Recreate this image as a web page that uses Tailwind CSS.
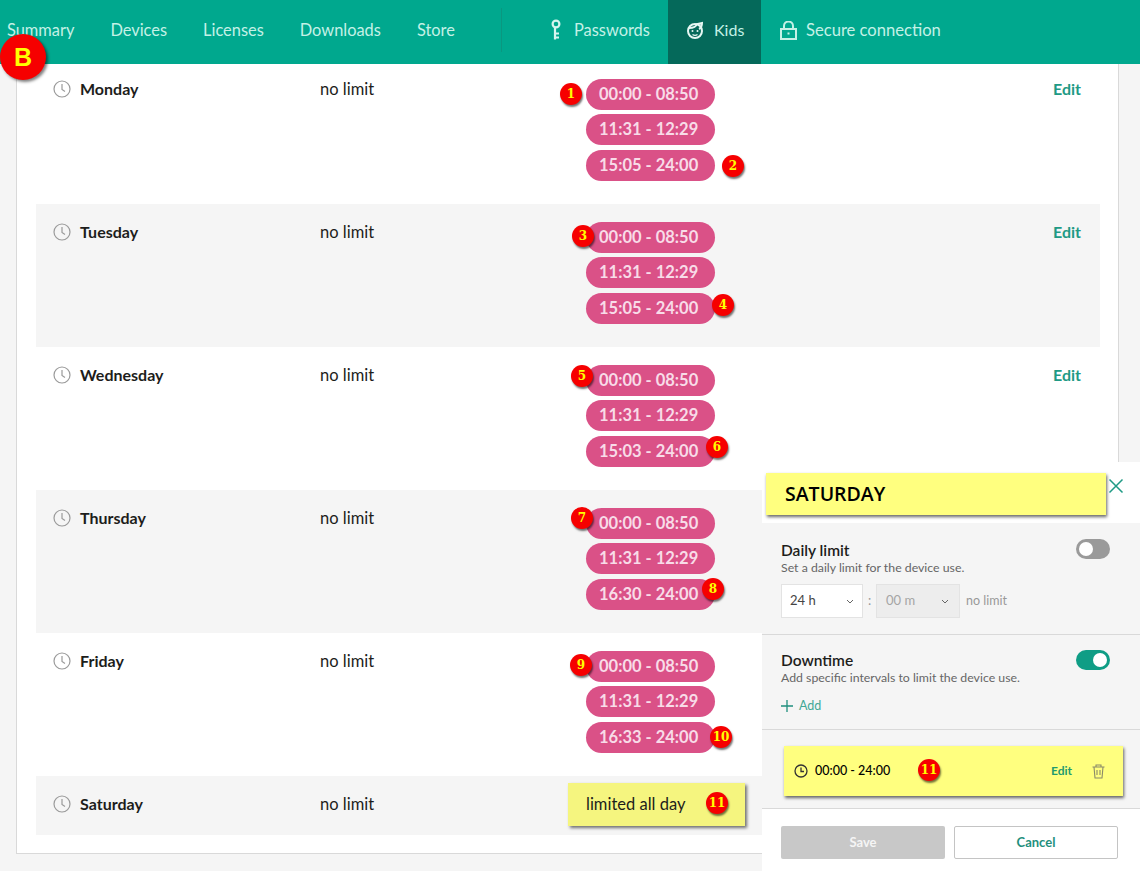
<!DOCTYPE html>
<html>
<head>
  <meta charset="UTF-8">
  <title>Kids</title>
  <script src="https://cdn.jsdelivr.net/npm/@tailwindcss/browser@4"></script>
</head>
<body class="relative w-[1140px] h-[871px] overflow-hidden bg-[#f5f5f5] font-['Lato',sans-serif] text-[#1d1d1b]">

  <!-- top nav -->
  <header class="h-16 bg-[#00a88e] flex items-stretch text-[16.4px] text-[#c4f1e6] pl-[7px]">
    <nav class="flex items-center gap-[36px] w-[494px] pb-[4px]">
      <span>Summary</span>
      <span>Devices</span>
      <span>Licenses</span>
      <span>Downloads</span>
      <span>Store</span>
    </nav>
    <div class="w-px h-[44px] mt-[8px] bg-[#0a9780]"></div>
    <div class="flex items-center gap-[13px] pl-[49px] w-[166px] pb-[4px]">
      <svg class="w-[10px] h-[22px] shrink-0" viewBox="0 0 10 22" fill="none" stroke="#d6f5ee" stroke-width="2.200"><circle cx="5" cy="5" r="3.400"/><path d="M4 8.500V20.500M4 14.500h4M4 18.500h4"/></svg>
      <span>Passwords</span>
    </div>
    <div class="flex items-center gap-[10px] w-[93px] pl-[18px] bg-[#05695a] pb-[4px]">
      <svg class="w-[18px] h-[18px] shrink-0" viewBox="0 0 18 18" fill="none" stroke="#e6f7f3" stroke-width="2"><circle cx="9" cy="10" r="7"/><path d="M3 7c3 0 7-1 8-4l5-1c0 3-1 5-3 6"/><circle cx="6.500" cy="10" r="1" fill="#e6f7f3" stroke="none"/><circle cx="11.500" cy="10" r="1" fill="#e6f7f3" stroke="none"/><path d="M6.500 13.500c1.500 1 3.500 1 5 0" stroke-width="1.300"/></svg>
      <span class="text-[16px]">Kids</span>
    </div>
    <div class="flex items-center gap-[9px] pl-[19px] pb-[4px]">
      <svg class="w-[17px] h-[19px] shrink-0" viewBox="0 0 17 19" fill="none" stroke="#c4f1e6" stroke-width="2"><rect x="1" y="8" width="15" height="10"/><path d="M4 8V5a4.500 4.500 0 0 1 9 0v3"/><rect x="7.500" y="11.500" width="2" height="2" fill="#c4f1e6" stroke="none"/></svg>
      <span class="text-[16.600px]">Secure connection</span>
    </div>
  </header>

  <!-- day list -->
  <main class="pl-4 pr-[21px]">
    <div class="bg-white border border-t-0 border-[#d9d9d9] pl-[19px] pr-[18px] pb-[18px] h-[790px]">

      <div class="flex h-[140px] pt-[15px] pl-[17px] pr-[18px]">
        <div class="flex items-start w-[533px]">
          <svg class="w-[18px] h-[18px] mr-[9px] mt-[1px]" viewBox="0 0 18 18" fill="none" stroke="#9a9a9a" stroke-width="1.200"><circle cx="9" cy="9" r="8"/><path d="M9 4v5.500l3 2"/></svg>
          <span class="w-[240px] font-bold leading-[20px]">Monday</span>
          <span class="leading-[20px] text-[16.500px]">no limit</span>
        </div>
        <div class="flex flex-col gap-[4px] w-[467px]">
          <span class="w-[129px] h-[31px] rounded-full bg-[#da5187] text-[#f8dce8] font-bold text-[16.500px] leading-[30px] pl-[13px]">00:00 - 08:50</span>
          <span class="w-[129px] h-[31px] rounded-full bg-[#da5187] text-[#f8dce8] font-bold text-[16.500px] leading-[30px] pl-[13px]">11:31 - 12:29</span>
          <span class="w-[129px] h-[31px] mt-[1px] rounded-full bg-[#da5187] text-[#f8dce8] font-bold text-[16.500px] leading-[30px] pl-[13px]">15:05 - 24:00</span>
        </div>
        <span class="font-bold text-[#1f9a85] leading-[20px]">Edit</span>
      </div>

      <div class="flex h-[143px] pt-[18px] pl-[17px] pr-[18px] bg-[#f5f5f5]">
        <div class="flex items-start w-[533px]">
          <svg class="w-[18px] h-[18px] mr-[9px] mt-[1px]" viewBox="0 0 18 18" fill="none" stroke="#9a9a9a" stroke-width="1.200"><circle cx="9" cy="9" r="8"/><path d="M9 4v5.500l3 2"/></svg>
          <span class="w-[240px] font-bold leading-[20px]">Tuesday</span>
          <span class="leading-[20px] text-[16.500px]">no limit</span>
        </div>
        <div class="flex flex-col gap-[4px] w-[467px]">
          <span class="w-[129px] h-[31px] rounded-full bg-[#da5187] text-[#f8dce8] font-bold text-[16.500px] leading-[30px] pl-[13px]">00:00 - 08:50</span>
          <span class="w-[129px] h-[31px] rounded-full bg-[#da5187] text-[#f8dce8] font-bold text-[16.500px] leading-[30px] pl-[13px]">11:31 - 12:29</span>
          <span class="w-[129px] h-[31px] mt-[1px] rounded-full bg-[#da5187] text-[#f8dce8] font-bold text-[16.500px] leading-[30px] pl-[13px]">15:05 - 24:00</span>
        </div>
        <span class="font-bold text-[#1f9a85] leading-[20px]">Edit</span>
      </div>

      <div class="flex h-[143px] pt-[18px] pl-[17px] pr-[18px]">
        <div class="flex items-start w-[533px]">
          <svg class="w-[18px] h-[18px] mr-[9px] mt-[1px]" viewBox="0 0 18 18" fill="none" stroke="#9a9a9a" stroke-width="1.200"><circle cx="9" cy="9" r="8"/><path d="M9 4v5.500l3 2"/></svg>
          <span class="w-[240px] font-bold leading-[20px]">Wednesday</span>
          <span class="leading-[20px] text-[16.500px]">no limit</span>
        </div>
        <div class="flex flex-col gap-[4px] w-[467px]">
          <span class="w-[129px] h-[31px] rounded-full bg-[#da5187] text-[#f8dce8] font-bold text-[16.500px] leading-[30px] pl-[13px]">00:00 - 08:50</span>
          <span class="w-[129px] h-[31px] rounded-full bg-[#da5187] text-[#f8dce8] font-bold text-[16.500px] leading-[30px] pl-[13px]">11:31 - 12:29</span>
          <span class="w-[129px] h-[31px] mt-[1px] rounded-full bg-[#da5187] text-[#f8dce8] font-bold text-[16.500px] leading-[30px] pl-[13px]">15:03 - 24:00</span>
        </div>
        <span class="font-bold text-[#1f9a85] leading-[20px]">Edit</span>
      </div>

      <div class="flex h-[143px] pt-[18px] pl-[17px] pr-[18px] bg-[#f5f5f5]">
        <div class="flex items-start w-[533px]">
          <svg class="w-[18px] h-[18px] mr-[9px] mt-[1px]" viewBox="0 0 18 18" fill="none" stroke="#9a9a9a" stroke-width="1.200"><circle cx="9" cy="9" r="8"/><path d="M9 4v5.500l3 2"/></svg>
          <span class="w-[240px] font-bold leading-[20px]">Thursday</span>
          <span class="leading-[20px] text-[16.500px]">no limit</span>
        </div>
        <div class="flex flex-col gap-[4px] w-[467px]">
          <span class="w-[129px] h-[31px] rounded-full bg-[#da5187] text-[#f8dce8] font-bold text-[16.500px] leading-[30px] pl-[13px]">00:00 - 08:50</span>
          <span class="w-[129px] h-[31px] rounded-full bg-[#da5187] text-[#f8dce8] font-bold text-[16.500px] leading-[30px] pl-[13px]">11:31 - 12:29</span>
          <span class="w-[129px] h-[31px] mt-[1px] rounded-full bg-[#da5187] text-[#f8dce8] font-bold text-[16.500px] leading-[30px] pl-[13px]">16:30 - 24:00</span>
        </div>
      </div>

      <div class="flex h-[143px] pt-[18px] pl-[17px] pr-[18px]">
        <div class="flex items-start w-[533px]">
          <svg class="w-[18px] h-[18px] mr-[9px] mt-[1px]" viewBox="0 0 18 18" fill="none" stroke="#9a9a9a" stroke-width="1.200"><circle cx="9" cy="9" r="8"/><path d="M9 4v5.500l3 2"/></svg>
          <span class="w-[240px] font-bold leading-[20px]">Friday</span>
          <span class="leading-[20px] text-[16.500px]">no limit</span>
        </div>
        <div class="flex flex-col gap-[4px] w-[467px]">
          <span class="w-[129px] h-[31px] rounded-full bg-[#da5187] text-[#f8dce8] font-bold text-[16.500px] leading-[30px] pl-[13px]">00:00 - 08:50</span>
          <span class="w-[129px] h-[31px] rounded-full bg-[#da5187] text-[#f8dce8] font-bold text-[16.500px] leading-[30px] pl-[13px]">11:31 - 12:29</span>
          <span class="w-[129px] h-[31px] mt-[1px] rounded-full bg-[#da5187] text-[#f8dce8] font-bold text-[16.500px] leading-[30px] pl-[13px]">16:33 - 24:00</span>
        </div>
      </div>

      <div class="flex h-[59px] pt-[18px] pl-[17px] pr-[18px] bg-[#f5f5f5]">
        <div class="flex items-start w-[533px]">
          <svg class="w-[18px] h-[18px] mr-[9px] mt-[1px]" viewBox="0 0 18 18" fill="none" stroke="#9a9a9a" stroke-width="1.200"><circle cx="9" cy="9" r="8"/><path d="M9 4v5.500l3 2"/></svg>
          <span class="w-[240px] font-bold leading-[20px]">Saturday</span>
          <span class="leading-[20px] text-[16.500px]">no limit</span>
        </div>
      </div>
    </div>
  </main>

  <!-- annotation over the Saturday row -->
  <div class="absolute left-[568px] top-[783px] w-[177px] h-[43px] bg-[#f5f57f] shadow-[2px_2px_3px_rgba(0,0,0,0.55)] pl-[18px] leading-[42px] text-[16.500px]">limited all day</div>

  <!-- Saturday side panel -->
  <aside class="absolute left-[762px] top-[462px] w-[378px] h-[409px] flex flex-col bg-[#f5f5f5]">
    <div class="h-[61px] shrink-0 bg-white flex items-start pt-[11px] pl-[4px]">
      <div class="w-[340px] h-[42px] bg-[#ffff7f] shadow-[1px_2px_3px_rgba(0,0,0,0.6)] pl-[19px] leading-[42px] text-[19.500px] font-['Open_Sans',sans-serif] font-semibold text-black">SATURDAY</div>
      <svg class="w-[16px] h-[16px] ml-[2px] mt-[5px]" viewBox="0 0 16 16" fill="none" stroke="#1f9a85" stroke-width="1.500"><path d="M1.500 1.500l13 13M14.500 1.500l-13 13"/></svg>
    </div>

    <section class="h-[112px] shrink-0 pl-[19px] pr-[30px] pt-[17px] border-b border-[#d9d9d9]">
      <div class="flex justify-between">
        <div>
          <div class="text-[15.500px] font-semibold leading-[20px]">Daily limit</div>
          <div class="text-[12.300px] text-[#666] leading-[16px]">Set a daily limit for the device use.</div>
        </div>
        <div class="w-[34px] h-[20px] rounded-full bg-[#9a9a9a] flex items-center pl-[3px] -mt-[1px]"><span class="w-[14px] h-[14px] rounded-full bg-white"></span></div>
      </div>
      <div class="flex items-center mt-[8px] text-[13px]">
        <div class="w-[82px] h-[34px] bg-white border border-[#e3e3e3] flex items-center justify-between pl-[8px] pr-[8px] text-[#444]">
          <span>24 h</span>
          <svg class="w-[8px] h-[5px]" viewBox="0 0 8 5" fill="none" stroke="#666" stroke-width="1"><path d="M1 1l3 3 3-3"/></svg>
        </div>
        <span class="w-[13px] text-center text-[#999]">:</span>
        <div class="w-[84px] h-[34px] bg-[#ededed] border border-[#e3e3e3] flex items-center justify-between pl-[9px] pr-[10px] text-[#a5a5a5]">
          <span>00 m</span>
          <svg class="w-[8px] h-[5px]" viewBox="0 0 8 5" fill="none" stroke="#666" stroke-width="1"><path d="M1 1l3 3 3-3"/></svg>
        </div>
        <span class="ml-[6px] text-[#999] text-[12.500px]">no limit</span>
      </div>
    </section>

    <section class="h-[95px] shrink-0 pl-[19px] pr-[30px] pt-[15px] border-b border-[#d9d9d9]">
      <div class="flex justify-between">
        <div>
          <div class="text-[15.500px] font-semibold leading-[20px]">Downtime</div>
          <div class="text-[12.300px] text-[#666] leading-[16px]">Add specific intervals to limit the device use.</div>
        </div>
        <div class="w-[34px] h-[20px] rounded-full bg-[#0f9d85] flex items-center justify-end pr-[3px]"><span class="w-[14px] h-[14px] rounded-full bg-white"></span></div>
      </div>
      <div class="flex items-center gap-[6px] mt-[11px] text-[12.500px] text-[#3fa896]">
        <svg class="w-[12px] h-[12px]" viewBox="0 0 12 12" fill="none" stroke="#1f8f7d" stroke-width="1.300"><path d="M6 0v12M0 6h12"/></svg>
        <span>Add</span>
      </div>
    </section>

    <section class="h-[79px] shrink-0 pl-[22px] pr-[17px] pt-[16px] border-b border-[#d9d9d9]">
      <div class="h-[50px] bg-[#ffff7f] shadow-[1px_2px_3px_rgba(0,0,0,0.6)] flex items-center pl-[10px] pr-[18px] text-[12.500px] font-medium text-black">
        <svg class="w-[14px] h-[14px] mr-[7px]" viewBox="0 0 14 14" fill="none" stroke="#333" stroke-width="1.300"><circle cx="7" cy="7" r="6"/><path d="M7 3.500V7.500h3"/></svg>
        <span class="flex-1">00:00 - 24:00</span>
        <span class="font-bold text-[12px] text-[#1f9a6f] mr-[20px]">Edit</span>
        <svg class="w-[13px] h-[15px]" viewBox="0 0 13 15" fill="none" stroke="#8a8a6a" stroke-width="1.100"><path d="M0.500 3h12M4 3V1h5v2M2 3l1 11h7l1-11M5 6v5M8 6v5"/></svg>
      </div>
    </section>

    <footer class="flex-1 bg-white flex gap-[9px] pl-[19px] pt-[17px] text-[13px] font-bold">
      <button class="w-[164px] h-[33px] rounded-[2px] bg-[#c8c8c8] text-[#f5f5f5]">Save</button>
      <button class="w-[164px] h-[33px] rounded-[2px] bg-white border border-[#c4c4c4] text-[#1f8f7d]">Cancel</button>
    </footer>
  </aside>

  <!-- red numbered markers -->
  <span class="absolute left-[0px] top-[34px] w-[46px] h-[46px] rounded-full bg-[#f60000] shadow-[2px_2px_3px_rgba(0,0,0,0.5)] text-[#ffff00] text-[25px] font-black text-center leading-[46px] font-['Liberation_Sans',sans-serif]">B</span>
  <span class="absolute left-[560px] top-[83px] w-[22px] h-[22px] rounded-full bg-[#f60000] shadow-[1px_2px_2px_rgba(0,0,0,0.55)] text-[#ffff00] text-[12px] font-bold text-center leading-[22px] font-['DejaVu_Serif',serif]">1</span>
  <span class="absolute left-[722px] top-[155px] w-[22px] h-[22px] rounded-full bg-[#f60000] shadow-[1px_2px_2px_rgba(0,0,0,0.55)] text-[#ffff00] text-[12px] font-bold text-center leading-[22px] font-['DejaVu_Serif',serif]">2</span>
  <span class="absolute left-[572px] top-[225px] w-[22px] h-[22px] rounded-full bg-[#f60000] shadow-[1px_2px_2px_rgba(0,0,0,0.55)] text-[#ffff00] text-[12px] font-bold text-center leading-[22px] font-['DejaVu_Serif',serif]">3</span>
  <span class="absolute left-[712px] top-[294px] w-[22px] h-[22px] rounded-full bg-[#f60000] shadow-[1px_2px_2px_rgba(0,0,0,0.55)] text-[#ffff00] text-[12px] font-bold text-center leading-[22px] font-['DejaVu_Serif',serif]">4</span>
  <span class="absolute left-[571px] top-[365px] w-[22px] h-[22px] rounded-full bg-[#f60000] shadow-[1px_2px_2px_rgba(0,0,0,0.55)] text-[#ffff00] text-[12px] font-bold text-center leading-[22px] font-['DejaVu_Serif',serif]">5</span>
  <span class="absolute left-[706px] top-[436px] w-[22px] h-[22px] rounded-full bg-[#f60000] shadow-[1px_2px_2px_rgba(0,0,0,0.55)] text-[#ffff00] text-[12px] font-bold text-center leading-[22px] font-['DejaVu_Serif',serif]">6</span>
  <span class="absolute left-[571px] top-[507px] w-[22px] h-[22px] rounded-full bg-[#f60000] shadow-[1px_2px_2px_rgba(0,0,0,0.55)] text-[#ffff00] text-[12px] font-bold text-center leading-[22px] font-['DejaVu_Serif',serif]">7</span>
  <span class="absolute left-[702px] top-[578px] w-[22px] h-[22px] rounded-full bg-[#f60000] shadow-[1px_2px_2px_rgba(0,0,0,0.55)] text-[#ffff00] text-[12px] font-bold text-center leading-[22px] font-['DejaVu_Serif',serif]">8</span>
  <span class="absolute left-[570px] top-[654px] w-[22px] h-[22px] rounded-full bg-[#f60000] shadow-[1px_2px_2px_rgba(0,0,0,0.55)] text-[#ffff00] text-[12px] font-bold text-center leading-[22px] font-['DejaVu_Serif',serif]">9</span>
  <span class="absolute left-[710px] top-[726px] w-[22px] h-[22px] rounded-full bg-[#f60000] shadow-[1px_2px_2px_rgba(0,0,0,0.55)] text-[#ffff00] text-[12px] font-bold text-center leading-[22px] font-['DejaVu_Serif',serif]">10</span>
  <span class="absolute left-[706px] top-[792px] w-[22px] h-[22px] rounded-full bg-[#f60000] shadow-[1px_2px_2px_rgba(0,0,0,0.55)] text-[#ffff00] text-[12px] font-bold text-center leading-[22px] font-['DejaVu_Serif',serif]">11</span>
  <span class="absolute left-[918px] top-[759px] w-[22px] h-[22px] rounded-full bg-[#f60000] shadow-[1px_2px_2px_rgba(0,0,0,0.55)] text-[#ffff00] text-[12px] font-bold text-center leading-[22px] font-['DejaVu_Serif',serif]">11</span>
</body>
</html>
